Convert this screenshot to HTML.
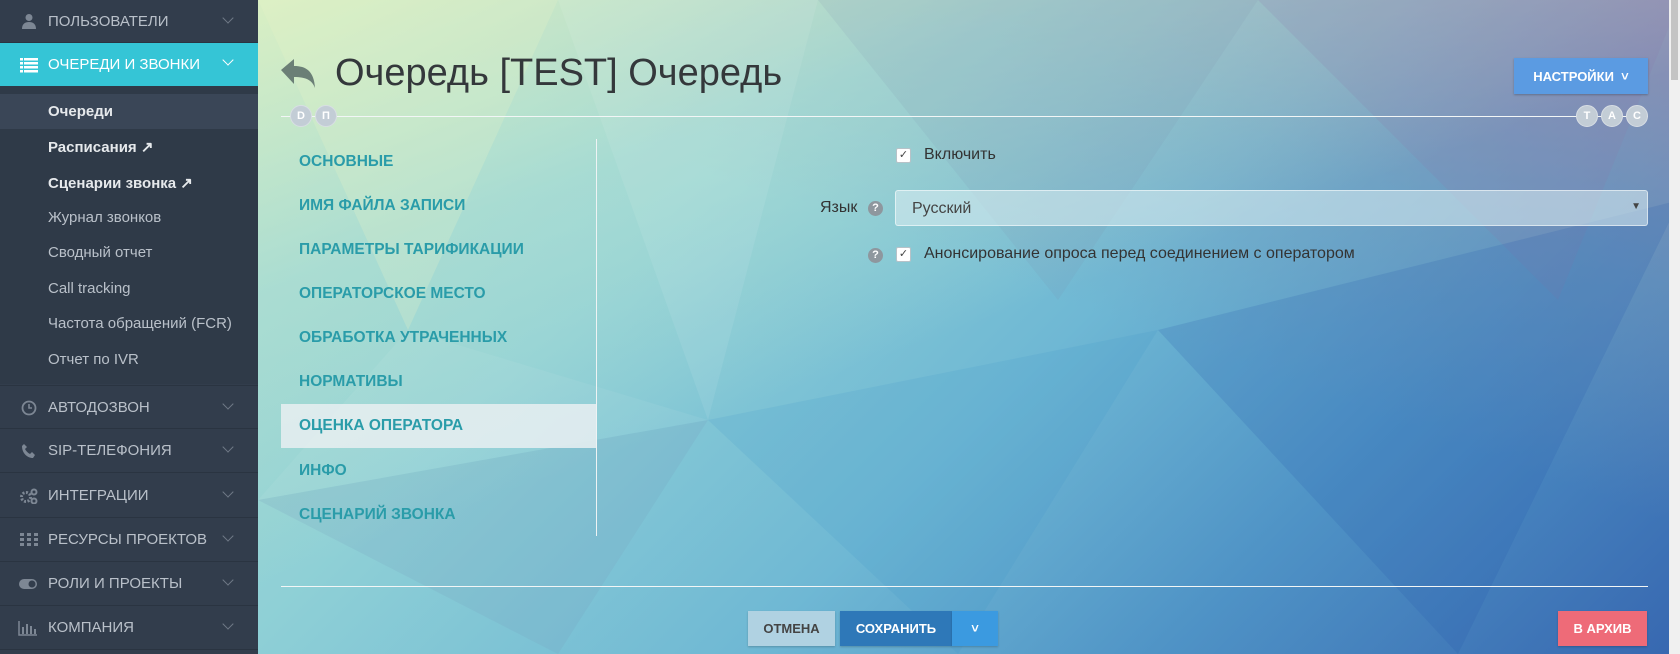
<!DOCTYPE html>
<html><head><meta charset="utf-8"><style>
*{box-sizing:border-box;margin:0;padding:0}
body{width:1680px;height:654px;overflow:hidden;font-family:"Liberation Sans",sans-serif;position:relative;background:#3a4a5c}
#sb{position:absolute;left:0;top:0;width:258px;height:654px;background:#323d4c;color:#b9c0c9;font-size:15px}
.sec{position:absolute;left:0;width:258px;height:44px;border-bottom:1px solid #2a3441;display:flex;align-items:center}
.sec .ic{position:absolute;left:20px;width:18px;height:16px;color:#7d8794}
.sec .t{position:absolute;left:48px}
.sec .ch{position:absolute;left:224px;width:8px;height:8px;border-right:1.5px solid #6f7986;border-bottom:1.5px solid #6f7986;transform:rotate(45deg);top:14px}
.act{background:#35c5d6;color:#fff}
.act .ch{border-color:#fff}
.sub{position:absolute;left:48px;font-size:15px}
.b{font-weight:bold;color:#e6e9ec}
#main{position:absolute;left:258px;top:0;width:1422px;height:654px;overflow:hidden;
background:
linear-gradient(160deg,rgba(220,240,195,.95) 0%,rgba(180,225,210,.6) 25%,rgba(140,205,215,0) 50%),
linear-gradient(200deg,rgba(150,140,175,.9) 0%,rgba(130,150,180,.4) 25%,rgba(110,160,200,0) 45%),
linear-gradient(135deg,#a8dccd 0%,#8fd0d6 30%,#6fb8d4 55%,#4f93c6 75%,#3767b0 100%)}
.tri{position:absolute;left:0;top:0}
#title{position:absolute;left:77px;top:52px;font-size:38px;color:#34383b;letter-spacing:0}
.hr{position:absolute;height:1px;background:#f2f6f6}
.circ{position:absolute;width:22px;height:22px;border-radius:50%;background:#c3cdd6;color:#fff;font-size:11px;font-weight:bold;display:flex;align-items:center;justify-content:center;border:1px solid #d8dee4}
#nast{position:absolute;left:1256px;top:58px;width:134px;height:36px;background:#5b9be2;color:#fff;font-size:13px;font-weight:bold;display:flex;align-items:center;justify-content:center;box-shadow:0 1px 2px rgba(0,0,0,.25)}
.tab{position:absolute;left:23px;width:315px;height:44px;padding-left:18px;display:flex;align-items:center;color:#2a9ca9;font-weight:bold;font-size:15.5px}
.tab.on{background:rgba(230,238,240,.88)}
.cb{position:absolute;width:15px;height:15px;background:#fff;border:1px solid #b7c2c8;border-radius:2px;font-size:11px;line-height:13px;text-align:center;color:#444}
.lbl{position:absolute;font-size:16px;color:#333}
.help{position:absolute;width:15px;height:15px;border-radius:50%;background:#8e979e;color:#fff;font-size:11px;font-weight:bold;text-align:center;line-height:15px}
#sel{position:absolute;left:637px;top:190px;width:753px;height:36px;background:rgba(220,238,242,.55);border:1px solid rgba(255,255,255,.55);border-radius:3px;font-size:16px;color:#444;padding:9px 16px}
.btn{position:absolute;top:611px;height:35px;display:flex;align-items:center;justify-content:center;font-size:13px;font-weight:bold;box-shadow:0 1px 2px rgba(0,0,0,.2)}
</style></head><body>
<div id="sb">
<div class="sec" style="top:0;height:43px"><svg class="ic" viewBox="0 0 16 16" style="top:13px"><circle cx="8" cy="4.5" r="3.5" fill="#7d8794"/><path d="M1 16c0-5 3-7 7-7s7 2 7 7z" fill="#7d8794"/></svg><span class="t">ПОЛЬЗОВАТЕЛИ</span><span class="ch"></span></div>
<div class="sec act" style="top:43px;height:43px;border:0"><svg class="ic" viewBox="0 0 18 16" style="top:14px"><g fill="#fff"><rect x="0" y="1" width="3" height="2.5"/><rect x="4" y="1" width="14" height="2.5"/><rect x="0" y="5" width="3" height="2.5"/><rect x="4" y="5" width="14" height="2.5"/><rect x="0" y="9" width="3" height="2.5"/><rect x="4" y="9" width="14" height="2.5"/><rect x="0" y="13" width="3" height="2.5"/><rect x="4" y="13" width="14" height="2.5"/></g></svg><span class="t">ОЧЕРЕДИ И ЗВОНКИ</span><span class="ch" style="top:13px"></span></div>
<div style="position:absolute;top:86px;left:0;width:258px;height:298px;background:#2f3a48"></div>
<div style="position:absolute;top:94px;left:0;width:258px;height:35px;background:#3a4657"></div>
<div class="sub b" style="top:103px">Очереди</div>
<div class="sub b" style="top:138px">Расписания ↗</div>
<div class="sub b" style="top:174px">Сценарии звонка ↗</div>
<div class="sub" style="top:209px">Журнал звонков</div>
<div class="sub" style="top:244px">Сводный отчет</div>
<div class="sub" style="top:280px">Call tracking</div>
<div class="sub" style="top:315px">Частота обращений (FCR)</div>
<div class="sub" style="top:351px">Отчет по IVR</div>
<div class="sec" style="top:385px;border-top:1px solid #2a3441"><svg class="ic" viewBox="0 0 16 16" style="top:14px"><circle cx="8" cy="8" r="6.5" fill="none" stroke="#7d8794" stroke-width="1.8"/><path d="M8 4v4h3" stroke="#7d8794" stroke-width="1.6" fill="none"/></svg><span class="t">АВТОДОЗВОН</span><span class="ch"></span></div>
<div class="sec" style="top:429px"><svg class="ic" viewBox="0 0 16 16" style="top:14px"><path d="M3 1l3 3-2 2c1 2 3 4 5 5l2-2 3 3-2 3C6 15 1 10 1 3z" fill="#7d8794"/></svg><span class="t">SIP-ТЕЛЕФОНИЯ</span><span class="ch"></span></div>
<div class="sec" style="top:474px"><svg class="ic" viewBox="0 0 18 16" style="top:14px"><circle cx="6" cy="9" r="4.5" fill="none" stroke="#7d8794" stroke-width="3" stroke-dasharray="2 1.5"/><circle cx="14" cy="4" r="2.5" fill="none" stroke="#7d8794" stroke-width="2"/><circle cx="14" cy="13" r="2.5" fill="none" stroke="#7d8794" stroke-width="2"/></svg><span class="t">ИНТЕГРАЦИИ</span><span class="ch"></span></div>
<div class="sec" style="top:518px"><svg class="ic" viewBox="0 0 18 16" style="top:14px"><g fill="#7d8794"><rect x="0" y="1" width="4" height="3"/><rect x="7" y="1" width="4" height="3"/><rect x="14" y="1" width="4" height="3"/><rect x="0" y="6" width="4" height="3"/><rect x="7" y="6" width="4" height="3"/><rect x="14" y="6" width="4" height="3"/><rect x="0" y="11" width="4" height="3"/><rect x="7" y="11" width="4" height="3"/><rect x="14" y="11" width="4" height="3"/></g></svg><span class="t">РЕСУРСЫ ПРОЕКТОВ</span><span class="ch"></span></div>
<div class="sec" style="top:562px"><svg class="ic" viewBox="0 0 20 16" style="top:14px;width:20px;left:18px"><rect x="1" y="3" width="18" height="10" rx="5" fill="#7d8794"/><circle cx="14" cy="8" r="3.5" fill="#323d4c"/></svg><span class="t">РОЛИ И ПРОЕКТЫ</span><span class="ch"></span></div>
<div class="sec" style="top:606px"><svg class="ic" viewBox="0 0 20 16" style="top:14px;width:20px;left:18px"><path d="M1 1v14h18" stroke="#7d8794" stroke-width="1.5" fill="none"/><g fill="#7d8794"><rect x="4" y="7" width="2" height="7"/><rect x="8" y="4" width="2" height="10"/><rect x="12" y="6" width="2" height="8"/><rect x="16" y="9" width="2" height="5"/></g></svg><span class="t">КОМПАНИЯ</span><span class="ch"></span></div>
</div>
<div id="main">
<svg class="tri" width="1422" height="654">
<polygon points="0,0 300,0 150,330" fill="rgba(230,245,200,.25)"/>
<polygon points="300,0 560,0 450,420" fill="rgba(255,255,255,.08)"/>
<polygon points="560,0 1000,0 800,300" fill="rgba(120,140,170,.12)"/>
<polygon points="1000,0 1422,0 1300,300" fill="rgba(140,120,170,.18)"/>
<polygon points="450,420 900,330 700,654" fill="rgba(60,150,200,.15)"/>
<polygon points="900,330 1422,200 1200,654" fill="rgba(40,90,170,.18)"/>
<polygon points="0,500 450,420 300,654" fill="rgba(120,160,190,.2)"/>
<polygon points="150,330 450,420 0,500" fill="rgba(255,255,255,.06)"/>
</svg>
<svg style="position:absolute;left:23px;top:59px" width="36" height="30" viewBox="0 0 36 30"><path d="M0 11L13 0v7c12 0 20 5 21 22-3-8-9-11-21-11v7z" fill="#6b7f76"/></svg>
<div id="title">Очередь [TEST] Очередь</div>
<div class="hr" style="left:23px;top:116px;width:1367px"></div>
<div class="circ" style="left:32px;top:105px">D</div>
<div class="circ" style="left:57px;top:105px">П</div>
<div class="circ" style="left:1318px;top:105px">Т</div>
<div class="circ" style="left:1343px;top:105px">А</div>
<div class="circ" style="left:1368px;top:105px">С</div>
<div id="nast">НАСТРОЙКИ &nbsp;˅</div>
<div style="position:absolute;left:338px;top:139px;width:1px;height:397px;background:#eef3f4"></div>
<div class="tab" style="top:140px">ОСНОВНЫЕ</div>
<div class="tab" style="top:184px">ИМЯ ФАЙЛА ЗАПИСИ</div>
<div class="tab" style="top:228px">ПАРАМЕТРЫ ТАРИФИКАЦИИ</div>
<div class="tab" style="top:272px">ОПЕРАТОРСКОЕ МЕСТО</div>
<div class="tab" style="top:316px">ОБРАБОТКА УТРАЧЕННЫХ</div>
<div class="tab" style="top:360px">НОРМАТИВЫ</div>
<div class="tab on" style="top:404px">ОЦЕНКА ОПЕРАТОРА</div>
<div class="tab" style="top:449px">ИНФО</div>
<div class="tab" style="top:493px">СЦЕНАРИЙ ЗВОНКА</div>
<div class="cb" style="left:638px;top:148px">✓</div>
<div class="lbl" style="left:666px;top:146px">Включить</div>
<div class="lbl" style="left:562px;top:199px">Язык</div>
<div class="help" style="left:610px;top:201px">?</div>
<div id="sel">Русский<span style="position:absolute;right:6px;top:10px;font-size:10px">▼</span></div>
<div class="help" style="left:610px;top:248px">?</div>
<div class="cb" style="left:638px;top:247px">✓</div>
<div class="lbl" style="left:666px;top:245px">Анонсирование опроса перед соединением с оператором</div>
<div class="hr" style="left:23px;top:586px;width:1367px"></div>
<div class="btn" style="left:490px;width:87px;background:#b0d2e2;color:#444">ОТМЕНА</div>
<div class="btn" style="left:582px;width:112px;background:#2e78b8;color:#fff">СОХРАНИТЬ</div>
<div class="btn" style="left:694px;width:46px;background:#3b9ae0;color:#fff">˅</div>
<div class="btn" style="left:1300px;width:89px;background:#ee6b78;color:#fff">В АРХИВ</div>
<div style="position:absolute;left:1411px;top:0;width:11px;height:654px;background:#f0f0f0"></div>
<div style="position:absolute;left:1413px;top:0;width:7px;height:80px;background:#c4c4c4"></div>
</div>
</body></html>
